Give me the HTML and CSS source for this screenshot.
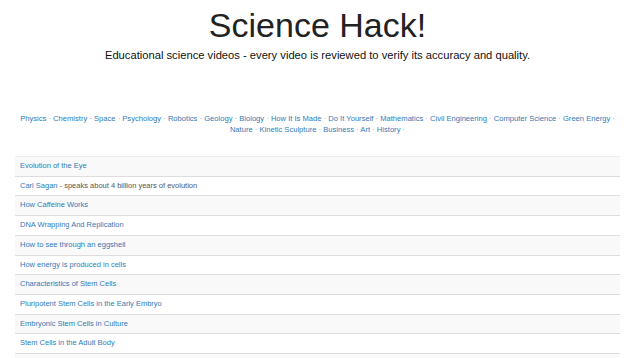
FILE: index.html
```html
<!DOCTYPE html>
<html>
<head>
<meta charset="utf-8">
<link rel="stylesheet" href="styles.css">
</head>
<body>
<div class="page">
  <header class="header">
    <h1 class="title">Science Hack!</h1>
    <p class="subtitle">Educational science videos - every video is reviewed to verify its accuracy and quality.</p>
  </header>
  <nav class="cats">
    <a href="#">Physics</a> · <a href="#">Chemistry</a> · <a href="#">Space</a> · <a href="#">Psychology</a> · <a href="#">Robotics</a> · <a href="#">Geology</a> · <a href="#">Biology</a> · <a href="#">How It Is Made</a> · <a href="#">Do It Yourself</a> · <a href="#">Mathematics</a> · <a href="#">Civil Engineering</a> · <a href="#">Computer Science</a> · <a href="#">Green Energy</a> · <a href="#">Nature</a> · <a href="#">Kinetic Sculpture</a> · <a href="#">Business</a> · <a href="#">Art</a> · <a href="#">History</a> ·
  </nav>
  <table class="videos">
    <tbody>
      <tr><td><a href="#">Evolution of the Eye</a></td></tr>
      <tr><td><a href="#">Carl Sagan</a> - speaks about 4 billion years of evolution</td></tr>
      <tr><td><a href="#">How Caffeine Works</a></td></tr>
      <tr><td><a href="#">DNA Wrapping And Replication</a></td></tr>
      <tr><td><a href="#">How to see through an eggshell</a></td></tr>
      <tr><td><a href="#">How energy is produced in cells</a></td></tr>
      <tr><td><a href="#">Characteristics of Stem Cells</a></td></tr>
      <tr><td><a href="#">Pluripotent Stem Cells in the Early Embryo</a></td></tr>
      <tr><td><a href="#">Embryonic Stem Cells in Culture</a></td></tr>
      <tr><td><a href="#">Stem Cells in the Adult Body</a></td></tr>
      <tr><td>&nbsp;</td></tr>
    </tbody>
  </table>
</div>
</body>
</html>
```

FILE: styles.css
```css
html, body {
  margin: 0;
  padding: 0;
  background: #fff;
}
body {
  font-family: "Liberation Sans", Arial, sans-serif;
  color: #333;
  overflow: hidden;
  height: 358px;
}
.page {
  padding: 0 20px 0 15px;
}
.header {
  text-align: center;
}
.title {
  margin: 0;
  padding-top: 6px;
  font-size: 34px;
  font-weight: normal;
  line-height: 38px;
  color: #222;
}
.subtitle {
  margin: 4px 0 0;
  font-size: 11.2px;
  line-height: 14px;
  color: #111;
}
.cats {
  margin-top: 51px;
  text-align: center;
  font-size: 7.6px;
  line-height: 11px;
  color: #8a9bb0;
  padding: 0 2px;
}
.cats a {
  color: #337ab7;
  text-decoration: none;
}
.videos {
  margin-top: 21px;
  width: 100%;
  border-collapse: collapse;
  border-spacing: 0;
  font-size: 7.5px;
}
.videos td {
  padding: 4px 5px;
  line-height: 10.7px;
  border-top: 1px solid #ddd;
  color: #555;
}
.videos tr:first-child td {
  border-top: 1px solid #eee;
}
.videos tr:nth-child(odd) td {
  background: #f9f9f9;
}
.videos a {
  color: #337ab7;
  text-decoration: none;
}
```
